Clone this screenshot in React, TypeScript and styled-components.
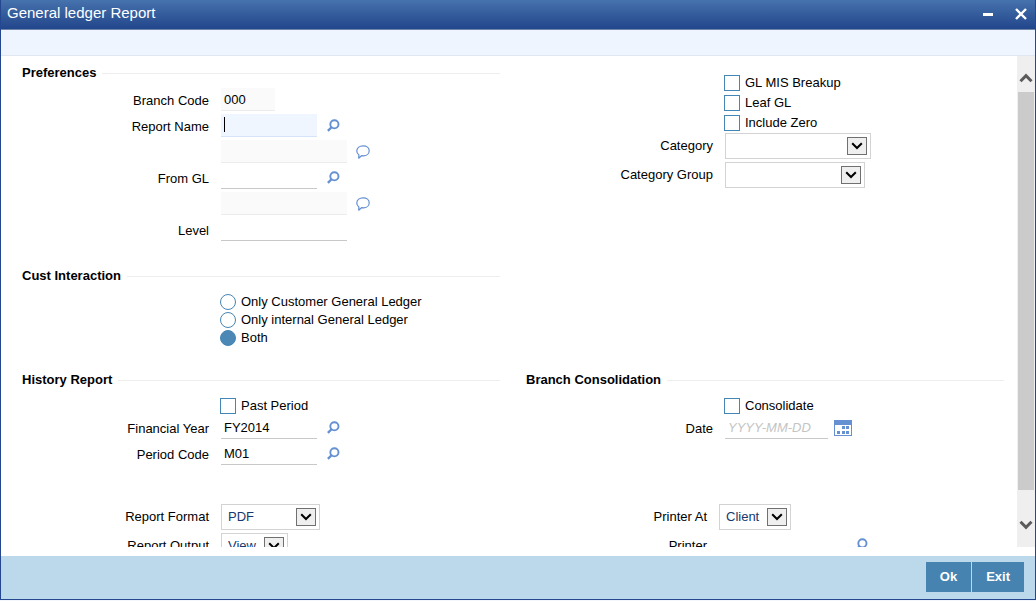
import React, { useId } from "react";
import styled, { createGlobalStyle, css } from "styled-components";

const GlobalStyle = createGlobalStyle`
  *, *::before, *::after { box-sizing: border-box; }
  body {
    margin: 0;
    background: #f4f7fb;
    color: #000;
    font-family: "Liberation Sans", Arial, sans-serif;
    font-size: 13px;
    line-height: 16px;
  }
  button, input, select { font: inherit; }
`;

const Window = styled.div`
  display: flex;
  flex-direction: column;
  height: calc(100vh - 1px);
  border: 1px solid #24478f;
  border-top: 0;
  background: #fff;
`;

const TitleBar = styled.header`
  display: flex;
  flex: none;
  align-items: center;
  justify-content: space-between;
  height: 30px;
  padding: 0 7px 4px 6px;
  border-bottom: 1px solid #6f86a8;
  background: linear-gradient(#4672ad, #22468b);
`;

const Title = styled.h1`
  margin: 0;
  color: #fff;
  font-size: 15px;
  font-weight: 400;
  line-height: 20px;
`;

const WindowControls = styled.div`
  display: flex;
  gap: 20px;
  padding-top: 2px;
`;

const PlainButton = styled.button`
  display: flex;
  flex: none;
  padding: 0;
  border: 0;
  background: none;
  cursor: pointer;
`;

const Toolbar = styled.div`
  flex: none;
  height: 26px;
  border-bottom: 1px solid #e2e6ee;
  background: #eff5ff;
`;

const Body = styled.div`
  display: flex;
  flex: 1;
  min-height: 0;
  margin-bottom: 9px;
`;

const Form = styled.form`
  flex: 1;
  min-width: 0;
  padding: 8px 13px 0 21px;
  overflow: hidden;
`;

const Columns = styled.div<{ $gap?: number; $after?: number }>`
  display: grid;
  grid-template-columns: 1fr 1fr;
  column-gap: ${({ $gap = 26 }) => $gap}px;
  margin-bottom: ${({ $after = 0 }) => $after}px;
`;

const OutputColumns = styled(Columns)`
  padding-right: 6px;
`;

const Section = styled.section``;

const Heading = styled.h2`
  display: flex;
  align-items: center;
  gap: 6px;
  margin: 0 0 6px;
  font-size: 13px;
  font-weight: 700;
  line-height: 18px;
  white-space: nowrap;

  &::after {
    content: "";
    flex: 1;
    border-top: 1px solid #eeeeee;
  }
`;

const Fields = styled.div`
  display: flex;
  flex-direction: column;
  gap: 3px;
`;

const Row = styled.div<{ $height?: number }>`
  display: grid;
  grid-template-columns: 187px 1fr;
  column-gap: 12px;
  align-items: center;
  height: ${({ $height = 23 }) => $height}px;
`;

const Label = styled.label`
  grid-column: 1;
  text-align: right;
  white-space: nowrap;
`;

const FieldLabel = styled(Label)`
  padding-top: 2px;
`;

const Control = styled.div<{ $gap?: number }>`
  display: flex;
  grid-column: 2;
  align-items: center;
  gap: ${({ $gap = 10 }) => $gap}px;
`;

type Tone = "plain" | "readonly" | "active";

const tones = {
  plain: css`border-bottom-color: #c8c8c8;`,
  readonly: css`
    border-bottom-color: #ececec;
    background: #fafafa;
  `,
  active: css`
    border-bottom-color: #d5e4f7;
    background: linear-gradient(#000, #000) 3px 3px / 1px 15px no-repeat, #f0f6ff;
  `,
};

const TextInput = styled.input<{ $width: number; $tone?: Tone }>`
  width: ${({ $width }) => $width}px;
  height: 23px;
  padding: 0 3px;
  border: 0;
  border-bottom: 1px solid;
  border-radius: 0;
  outline: 0;
  background: #fff;
  color: #000;
  ${({ $tone = "plain" }) => tones[$tone]}

  &::placeholder {
    color: #c4c4c4;
    font-style: italic;
    opacity: 1;
  }
`;

const Choices = styled.div<{ $gap: number; $top?: number }>`
  display: flex;
  flex-direction: column;
  align-items: flex-start;
  gap: ${({ $gap }) => $gap}px;
  padding: ${({ $top = 3 }) => $top}px 0 2px 198px;
`;

const ChoiceLabel = styled.label`
  display: flex;
  align-items: center;
  gap: 5px;
  height: 16px;
  line-height: 18px;
  white-space: nowrap;
`;

const Tick = styled.input`
  flex: none;
  width: 16px;
  height: 16px;
  margin: 0;
  appearance: none;
  border: 1px solid #4686b5;
  border-radius: ${({ type }) => (type === "radio" ? "50%" : "0")};
  background: #fff;

  &:checked { background: #4b88b5; }
`;

const SelectBox = styled.div<{ $width: number }>`
  position: relative;
  width: ${({ $width }) => $width}px;
  height: 26px;
`;

const Select = styled.select`
  display: block;
  width: 100%;
  height: 100%;
  padding: 0 24px 0 6px;
  appearance: none;
  border: 1px solid #d3d3d3;
  border-radius: 0;
  background: #fff;
  color: #17396f;
`;

const SelectArrow = styled.span`
  position: absolute;
  top: 4px;
  right: 4px;
  display: flex;
  align-items: center;
  justify-content: center;
  width: 20px;
  height: 18px;
  border: 1px solid #707070;
  background: #efefef;
  pointer-events: none;
`;

const ScrollTrack = styled.div`
  display: flex;
  flex: none;
  flex-direction: column;
  width: 18px;
  background: #efefef;
`;

const ScrollButton = styled(PlainButton)<{ $end?: boolean }>`
  align-items: ${({ $end }) => ($end ? "flex-end" : "flex-start")};
  justify-content: center;
  height: 36px;
  padding: 9px 0;
`;

const ScrollRail = styled.div`
  flex: 1;
  min-height: 0;
  padding: 0 1px;
`;

const ScrollThumb = styled.div`
  height: 95%;
  background: #cbcbcb;
`;

const Footer = styled.footer`
  display: flex;
  flex: none;
  align-items: center;
  justify-content: flex-end;
  gap: 1px;
  height: 43px;
  padding: 0 11px 2px;
  background: #bcd8eb;
`;

const ActionButton = styled.button`
  height: 30px;
  padding: 0 14px;
  border: 0;
  background: #4783b1;
  color: #fff;
  font-size: 13px;
  font-weight: 700;
  cursor: pointer;
`;

const SearchIcon = () => (
  <svg width="13" height="13" viewBox="0 0 13 13" fill="none" stroke="#6590d2" aria-hidden="true">
    <circle cx="7.4" cy="5.3" r="4.1" strokeWidth="1.9" />
    <path d="M4.500 8.300 .9 11.900" strokeWidth="2.300" />
  </svg>
);

const NoteIcon = () => (
  <svg width="14" height="14" viewBox="0 0 14 14" fill="none" stroke="#648fd3" strokeWidth="1.200" aria-hidden="true">
    <path d="M2.700 13.200 2.900 9.900C1.500 8.900.7 7.400.8 5.700 1 2.900 3.600.8 7.100.8s6.100 2 6.100 4.900-2.500 5.100-5.800 5.100c-.7 0-1.300 0-1.900-.1Z" strokeLinejoin="round" />
  </svg>
);

const CalendarIcon = () => (
  <svg width="18" height="16" viewBox="0 0 18 16" aria-hidden="true">
    <path d="M0 0h18v16H0Z" fill="#6590d2" />
    <path d="M1 5h16v10H1Z" fill="#fff" />
    <path d="M8 6h3v3H8ZM12 6h3v3h-3ZM3 11h3v3H3ZM8 11h3v3H8ZM12 11h3v3h-3Z" fill="#6590d2" />
  </svg>
);

const Chevron = () => (
  <svg width="12" height="8" viewBox="0 0 12 8" fill="none" stroke="#000" strokeWidth="2" aria-hidden="true">
    <path d="M1.200 1.200 6 6l4.800-4.800" />
  </svg>
);

const ScrollChevron = ({ d }: { d: string }) => (
  <svg width="14" height="10" viewBox="0 0 14 10" fill="none" stroke="#5b5b5b" strokeWidth="3" aria-hidden="true">
    <path d={d} />
  </svg>
);

interface FieldProps {
  label?: string;
  name: string;
  width: number;
  value?: string;
  tone?: Tone;
  placeholder?: string;
  icon?: React.ReactNode;
  action?: string;
  gap?: number;
}

function Field({ label, name, width, value, tone, placeholder, icon, action, gap }: FieldProps) {
  const id = useId();
  return (
    <Row>
      {label && <FieldLabel htmlFor={id}>{label}</FieldLabel>}
      <Control $gap={gap}>
        <TextInput
          id={id}
          type="text"
          aria-label={label ? undefined : name}
          $width={width}
          $tone={tone}
          defaultValue={value}
          placeholder={placeholder}
          readOnly={tone === "readonly"}
        />
        {icon && <PlainButton type="button" aria-label={action}>{icon}</PlainButton>}
      </Control>
    </Row>
  );
}

function SelectField({ label, width, option = "" }: { label: string; width: number; option?: string }) {
  const id = useId();
  return (
    <Row $height={26}>
      <Label htmlFor={id}>{label}</Label>
      <SelectBox $width={width}>
        <Select id={id} defaultValue={option}>
          <option value={option}>{option}</option>
        </Select>
        <SelectArrow><Chevron /></SelectArrow>
      </SelectBox>
    </Row>
  );
}

function Choice({ label, type = "checkbox", checked }: { label: string; type?: "checkbox" | "radio"; checked?: boolean }) {
  return (
    <ChoiceLabel>
      <Tick type={type} name={type === "radio" ? "interaction" : undefined} defaultChecked={checked} />
      {label}
    </ChoiceLabel>
  );
}

export default function App() {
  return (
    <>
      <GlobalStyle />
      <Window>
        <TitleBar>
          <Title>General ledger Report</Title>
          <WindowControls>
            <PlainButton type="button" aria-label="Minimize">
              <svg width="12" height="14" viewBox="0 0 12 14"><path d="M1 6h10v3H1Z" fill="#fff" /></svg>
            </PlainButton>
            <PlainButton type="button" aria-label="Close">
              <svg width="14" height="14" viewBox="0 0 14 14" stroke="#fff" strokeWidth="2.400">
                <path d="m2 2 10 10M12 2 2 12" />
              </svg>
            </PlainButton>
          </WindowControls>
        </TitleBar>
        <Toolbar />
        <Body>
          <Form>
            <Columns $after={26}>
              <Section>
                <Heading>Preferences</Heading>
                <Fields>
                  <Field label="Branch Code" name="branch" width={54} value="000" tone="readonly" />
                  <Field label="Report Name" name="report" width={96} tone="active" icon={<SearchIcon />} action="Find report" />
                  <Field name="Report description" width={126} tone="readonly" icon={<NoteIcon />} action="Show report description" gap={9} />
                  <Field label="From GL" name="gl" width={96} icon={<SearchIcon />} action="Find GL" />
                  <Field name="GL description" width={126} tone="readonly" icon={<NoteIcon />} action="Show GL description" gap={9} />
                  <Field label="Level" name="level" width={126} />
                </Fields>
              </Section>
              <Section>
                <Choices $gap={4} $top={11}>
                  <Choice label="GL MIS Breakup" />
                  <Choice label="Leaf GL" />
                  <Choice label="Include Zero" />
                </Choices>
                <Fields>
                  <SelectField label="Category" width={146} />
                  <SelectField label="Category Group" width={140} />
                </Fields>
              </Section>
            </Columns>

            <Columns $after={23}>
              <Section>
                <Heading>Cust Interaction</Heading>
                <Choices $gap={2} role="radiogroup" aria-label="Cust Interaction">
                  <Choice type="radio" label="Only Customer General Ledger" />
                  <Choice type="radio" label="Only internal General Ledger" />
                  <Choice type="radio" label="Both" checked />
                </Choices>
              </Section>
            </Columns>

            <Columns $after={39}>
              <Section>
                <Heading>History Report</Heading>
                <Choices $gap={2}>
                  <Choice label="Past Period" />
                </Choices>
                <Fields>
                  <Field label="Financial Year" name="year" width={96} value="FY2014" icon={<SearchIcon />} action="Find financial year" />
                  <Field label="Period Code" name="period" width={96} value="M01" icon={<SearchIcon />} action="Find period code" />
                </Fields>
              </Section>
              <Section>
                <Heading>Branch Consolidation</Heading>
                <Choices $gap={2}>
                  <Choice label="Consolidate" />
                </Choices>
                <Fields>
                  <Field label="Date" name="date" width={103} placeholder="YYYY-MM-DD" icon={<CalendarIcon />} action="Pick a date" gap={6} />
                </Fields>
              </Section>
            </Columns>

            <OutputColumns $gap={20}>
              <Fields>
                <SelectField label="Report Format" width={99} option="PDF" />
                <SelectField label="Report Output" width={67} option="View" />
              </Fields>
              <Fields>
                <SelectField label="Printer At" width={72} option="Client" />
                <Field label="Printer" name="printer" width={126} icon={<SearchIcon />} action="Find printer" />
              </Fields>
            </OutputColumns>
          </Form>
          <ScrollTrack>
            <ScrollButton type="button" aria-label="Scroll up" $end>
              <ScrollChevron d="m1.500 8.200 5.500-5.500 5.500 5.500" />
            </ScrollButton>
            <ScrollRail><ScrollThumb /></ScrollRail>
            <ScrollButton type="button" aria-label="Scroll down">
              <ScrollChevron d="m1.500 1.800 5.500 5.500 5.500-5.500" />
            </ScrollButton>
          </ScrollTrack>
        </Body>
        <Footer>
          <ActionButton type="button">Ok</ActionButton>
          <ActionButton type="button">Exit</ActionButton>
        </Footer>
      </Window>
    </>
  );
}
